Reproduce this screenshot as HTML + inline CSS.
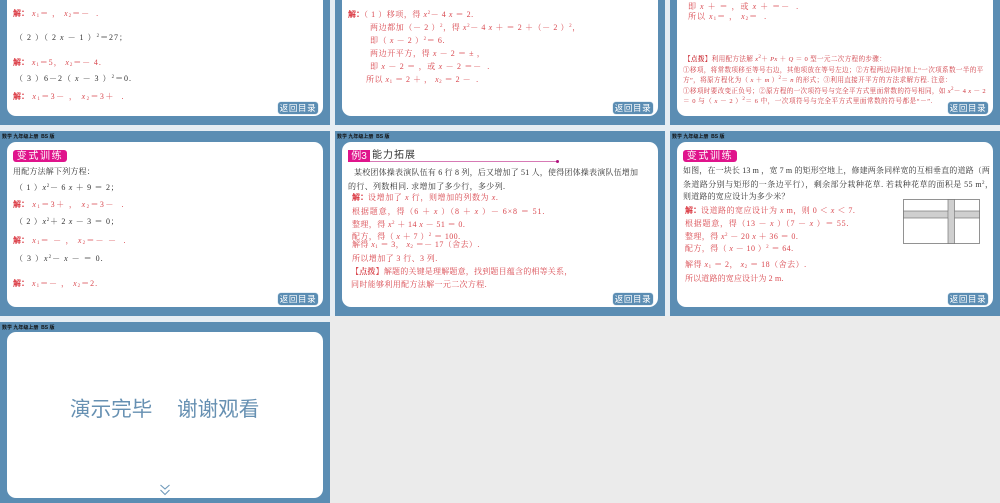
<!DOCTYPE html>
<html lang="zh"><head><meta charset="utf-8">
<style>
html,body{margin:0;padding:0}
body{width:1000px;height:503px;overflow:hidden;position:relative;background:#e6edf3;font-family:"Liberation Serif","Noto Serif CJK SC",serif}
.s{position:absolute;background:#5b8db3;width:330px}
.c{position:absolute;left:7px;width:316px;background:#fff;border-radius:9px}
.t{position:absolute;white-space:nowrap;font-size:8px;line-height:10px;color:#333;filter:blur(.3px)}
.r{color:#d9484f}
.k{color:#d9303a;font-weight:bold;font-family:"Liberation Sans","Noto Sans CJK SC",sans-serif;letter-spacing:0}
i{font-style:italic}
sub{font-size:5px;line-height:0;vertical-align:-1px}
sup{font-size:5px;line-height:0;vertical-align:3px}
.b{position:absolute;left:278px;width:40px;height:12px;background:#5b8db3;border-radius:3px;color:#fff;font:8.5px/12px "Liberation Sans","Noto Sans CJK SC",sans-serif;text-align:center;letter-spacing:.6px;box-shadow:0 0 0 .5px #cfe0ec;filter:blur(.2px)}
.h{position:absolute;left:2px;top:3px;font:bold 5px/6px "Liberation Sans","Noto Sans CJK SC",sans-serif;color:#111;white-space:nowrap}
.m{position:absolute;left:13px;top:19px;width:54px;height:12px;background:#e0148c;border-radius:3px;color:#fff;font:10px/13px "Liberation Sans","Noto Sans CJK SC",sans-serif;text-align:center;letter-spacing:1.6px;overflow:hidden}
.small{font-size:6.6px;color:#cf3a42;letter-spacing:.32px}
</style></head><body>
<div style="position:absolute;left:330px;top:316px;width:670px;height:187px;background:#ebebeb"></div>

<!-- Row 1 -->
<div class="s" style="left:0;top:-10px;height:135px"><div class="c" style="top:0;height:126px"></div><div class="b" style="top:112px">返回目录</div></div>
<div class="s" style="left:335px;top:-10px;height:135px"><div class="c" style="top:0;height:126px"></div><div class="b" style="top:112px">返回目录</div></div>
<div class="s" style="left:670px;top:-10px;height:135px"><div class="c" style="top:0;height:126px"></div><div class="b" style="top:112px">返回目录</div></div>

<div class="t r" style="left:13px;top:9px;letter-spacing:1px"><span class="k">解：</span>&nbsp;<i>x</i><sub>1</sub>＝ ，&nbsp;<i>x</i><sub>2</sub>＝－&nbsp;&nbsp;.</div>
<div class="t" style="left:15px;top:33px;letter-spacing:1px">（ 2 ）（ 2 <i>x</i> － 1 ）<sup>2</sup>＝27；</div>
<div class="t r" style="left:13px;top:58px;letter-spacing:.9px"><span class="k">解：</span>&nbsp;<i>x</i><sub>1</sub>＝5，&nbsp;<i>x</i><sub>2</sub>＝－ 4.</div>
<div class="t" style="left:15px;top:74px;letter-spacing:1px">（ 3 ）6－2（ <i>x</i> － 3 ）<sup>2</sup>＝0.</div>
<div class="t r" style="left:13px;top:92px;letter-spacing:1.4px"><span class="k">解：</span>&nbsp;<i>x</i><sub>1</sub>＝3－ ，&nbsp;<i>x</i><sub>2</sub>＝3＋&nbsp;&nbsp;.</div>

<div class="t r" style="left:348px;top:10px;letter-spacing:.55px"><span class="k">解：</span>（ 1 ）移项，得 <i>x</i><sup>2</sup>－ 4 <i>x</i> ＝ 2.</div>
<div class="t r" style="left:370px;top:23px;letter-spacing:.6px">两边都加（－ 2 ）<sup>2</sup>，得 <i>x</i><sup>2</sup>－ 4 <i>x</i> ＋ ＝ 2 ＋（－ 2 ）<sup>2</sup>，</div>
<div class="t r" style="left:370px;top:36px;letter-spacing:.6px">即（ <i>x</i> － 2 ）<sup>2</sup>＝ 6.</div>
<div class="t r" style="left:370px;top:49px;letter-spacing:.6px">两边开平方，得 <i>x</i> － 2 ＝ ± ，</div>
<div class="t r" style="left:370px;top:62px;letter-spacing:.7px">即 <i>x</i> － 2 ＝ ，或 <i>x</i> － 2 ＝－&nbsp;&nbsp;.</div>
<div class="t r" style="left:366px;top:75px;letter-spacing:.5px">所以 <i>x</i><sub>1</sub> ＝ 2 ＋ ，&nbsp;<i>x</i><sub>2</sub> ＝ 2 －&nbsp;&nbsp;.</div>

<div class="t r" style="left:688px;top:2px;letter-spacing:1px">即 <i>x</i> ＋ ＝ ，或 <i>x</i> ＋ ＝－&nbsp;&nbsp;.</div>
<div class="t r" style="left:688px;top:12px;letter-spacing:1px">所以 <i>x</i><sub>1</sub>＝ ，&nbsp;<i>x</i><sub>2</sub>＝&nbsp;&nbsp;.</div>
<div class="t small" style="left:684px;top:55px"><b>【点拨】</b>利用配方法解 <i>x</i><sup>2</sup>＋ <i>Px</i> ＋ <i>Q</i> ＝ 0 型一元二次方程的步骤：</div>
<div class="t small" style="left:683px;top:66px">①移项，将常数项移至等号右边，其他项放在等号左边；②方程两边同时加上“一次项系数一半的平</div>
<div class="t small" style="left:683px;top:76px">方”，将原方程化为（ <i>x</i> ＋ <i>m</i> ）<sup>2</sup>＝ <i>n</i> 的形式；③利用直接开平方的方法求解方程. 注意：</div>
<div class="t small" style="left:683px;top:87px">①移项时要改变正负号；②原方程的一次项符号与完全平方式里面常数的符号相同，如 <i>x</i><sup>2</sup>－ 4 <i>x</i> － 2</div>
<div class="t small" style="left:683px;top:97px;letter-spacing:.5px">＝ 0 与（ <i>x</i> － 2 ）<sup>2</sup>＝ 6 中，一次项符号与完全平方式里面常数的符号都是“－”.</div>

<!-- Row 2 -->
<div class="s" style="left:0;top:131px;height:185px"><div class="h">数学 九年级上册&nbsp; BS 版</div><div class="c" style="top:11px;height:165px"></div><div class="m">变式训练</div><div class="b" style="top:162px">返回目录</div></div>
<div class="s" style="left:335px;top:131px;height:185px"><div class="h">数学 九年级上册&nbsp; BS 版</div><div class="c" style="top:11px;height:165px"></div><div class="b" style="top:162px">返回目录</div></div>
<div class="s" style="left:670px;top:131px;height:185px"><div class="h">数学 九年级上册&nbsp; BS 版</div><div class="c" style="top:11px;height:165px"></div><div class="m">变式训练</div><div class="b" style="top:162px">返回目录</div></div>

<div class="t" style="left:13px;top:167px;letter-spacing:.2px">用配方法解下列方程：</div>
<div class="t" style="left:15px;top:183px;letter-spacing:.7px">（ 1 ）<i>x</i><sup>2</sup>－ 6 <i>x</i> ＋ 9 ＝ 2；</div>
<div class="t r" style="left:13px;top:200px;letter-spacing:1.4px"><span class="k">解：</span>&nbsp;<i>x</i><sub>1</sub>＝3＋ ，&nbsp;<i>x</i><sub>2</sub>＝3－&nbsp;&nbsp;.</div>
<div class="t" style="left:15px;top:217px;letter-spacing:.7px">（ 2 ）<i>x</i><sup>2</sup>＋ 2 <i>x</i> － 3 ＝ 0；</div>
<div class="t r" style="left:13px;top:236px;letter-spacing:1.2px"><span class="k">解：</span>&nbsp;<i>x</i><sub>1</sub>＝ － ，&nbsp;<i>x</i><sub>2</sub>＝－ －&nbsp;&nbsp;.</div>
<div class="t" style="left:15px;top:254px;letter-spacing:1px">（ 3 ）<i>x</i><sup>2</sup>－ <i>x</i> － ＝ 0.</div>
<div class="t r" style="left:13px;top:279px;letter-spacing:1px"><span class="k">解：</span>&nbsp;<i>x</i><sub>1</sub>＝－ ，&nbsp;<i>x</i><sub>2</sub>＝2.</div>

<div style="position:absolute;left:348px;top:150px;width:22px;height:12px;background:#e0148c;color:#fff;font:10px/13px 'Liberation Sans','Noto Sans CJK SC',sans-serif;text-align:center;overflow:hidden">例3</div>
<div style="position:absolute;left:372px;top:149px;font:10px/13px 'Liberation Sans','Noto Sans CJK SC',sans-serif;letter-spacing:1px;color:#333;white-space:nowrap">能力拓展</div>
<div style="position:absolute;left:370px;top:161px;width:187px;height:1px;background:#d77ab5"></div>
<div style="position:absolute;left:556px;top:160px;width:3px;height:3px;border-radius:50%;background:#b0127e"></div>
<div class="t" style="left:354px;top:168px;letter-spacing:.2px">某校团体操表演队伍有 6 行 8 列，后又增加了 51 人，使得团体操表演队伍增加</div>
<div class="t" style="left:348px;top:182px;letter-spacing:.35px">的行、列数相同. 求增加了多少行，多少列.</div>
<div class="t r" style="left:352px;top:193px;letter-spacing:.6px"><span class="k">解：</span>设增加了 <i>x</i> 行，则增加的列数为 <i>x</i>.</div>
<div class="t r" style="left:352px;top:207px;letter-spacing:.9px">根据题意，得（6 ＋ <i>x</i> ）（8 ＋ <i>x</i> ）－ 6×8 ＝ 51.</div>
<div class="t r" style="left:352px;top:220px;letter-spacing:.4px">整理，得 <i>x</i><sup>2</sup> ＋ 14 <i>x</i> － 51 ＝ 0.</div>
<div class="t r" style="left:352px;top:232px;letter-spacing:.4px">配方，得（ <i>x</i> ＋ 7 ）<sup>2</sup> ＝ 100.</div>
<div class="t r" style="left:352px;top:240px;letter-spacing:.4px">解得 <i>x</i><sub>1</sub> ＝ 3，&nbsp;<i>x</i><sub>2</sub> ＝－ 17（舍去）.</div>
<div class="t r" style="left:352px;top:254px;letter-spacing:.4px">所以增加了 3 行、3 列.</div>
<div class="t r" style="left:351px;top:267px;letter-spacing:.2px"><b>【点拨】</b>解题的关键是理解题意，找到题目蕴含的相等关系，</div>
<div class="t r" style="left:351px;top:280px;letter-spacing:.35px">同时能够利用配方法解一元二次方程.</div>

<div class="t" style="left:683px;top:166px;letter-spacing:.15px">如图，在一块长 13 m ，宽 7 m 的矩形空地上，修建两条同样宽的互相垂直的道路（两</div>
<div class="t" style="left:683px;top:180px;letter-spacing:.42px">条道路分别与矩形的一条边平行），剩余部分栽种花草. 若栽种花草的面积是 55 m<sup>2</sup>，</div>
<div class="t" style="left:683px;top:192px;letter-spacing:.2px">则道路的宽应设计为多少米？</div>
<div class="t r" style="left:685px;top:206px;letter-spacing:.5px"><span class="k">解：</span>设道路的宽应设计为 <i>x</i> m，则 0 ＜ <i>x</i> ＜ 7.</div>
<div class="t r" style="left:685px;top:219px;letter-spacing:.75px">根据题意，得（13 － <i>x</i> ）（7 － <i>x</i> ）＝ 55.</div>
<div class="t r" style="left:685px;top:232px;letter-spacing:.4px">整理，得 <i>x</i><sup>2</sup> － 20 <i>x</i> ＋ 36 ＝ 0.</div>
<div class="t r" style="left:685px;top:244px;letter-spacing:.4px">配方，得（ <i>x</i> － 10 ）<sup>2</sup> ＝ 64.</div>
<div class="t r" style="left:685px;top:260px;letter-spacing:.5px">解得 <i>x</i><sub>1</sub> ＝ 2，&nbsp;<i>x</i><sub>2</sub> ＝ 18（舍去）.</div>
<div class="t r" style="left:685px;top:274px;letter-spacing:.15px">所以道路的宽应设计为 2 m.</div>
<svg style="position:absolute;left:900px;top:195px" width="84" height="54" viewBox="0 0 84 54">
<rect x="3.5" y="4.5" width="76" height="44" fill="#fff" stroke="#777" stroke-width=".8"/>
<rect x="3.5" y="16" width="76" height="7" fill="#cfcfcf" stroke="#777" stroke-width=".7"/>
<rect x="48" y="4.5" width="6.5" height="44" fill="#cfcfcf" stroke="#777" stroke-width=".7"/>
<rect x="48.4" y="16.4" width="5.7" height="6.2" fill="#cfcfcf"/>
</svg>

<!-- Row 3 -->
<div class="s" style="left:0;top:322px;height:181px"><div class="h">数学 九年级上册&nbsp; BS 版</div><div class="c" style="top:10px;height:166px"></div></div>
<div style="position:absolute;left:70px;top:395px;font:20.6px/30px 'Liberation Sans','Noto Sans CJK SC',sans-serif;color:#6690b2;white-space:nowrap">演示完毕</div>
<div style="position:absolute;left:177px;top:395px;font:20.6px/30px 'Liberation Sans','Noto Sans CJK SC',sans-serif;color:#6690b2;white-space:nowrap">谢谢观看</div>
<svg style="position:absolute;left:158px;top:483px" width="14" height="14" viewBox="0 0 14 14" fill="none" stroke="#6f99ba" stroke-width="1.1">
<path d="M2.5 2 L7 6 L11.5 2"/><path d="M2.5 7 L7 11.5 L11.5 7"/>
</svg>
</body></html>
